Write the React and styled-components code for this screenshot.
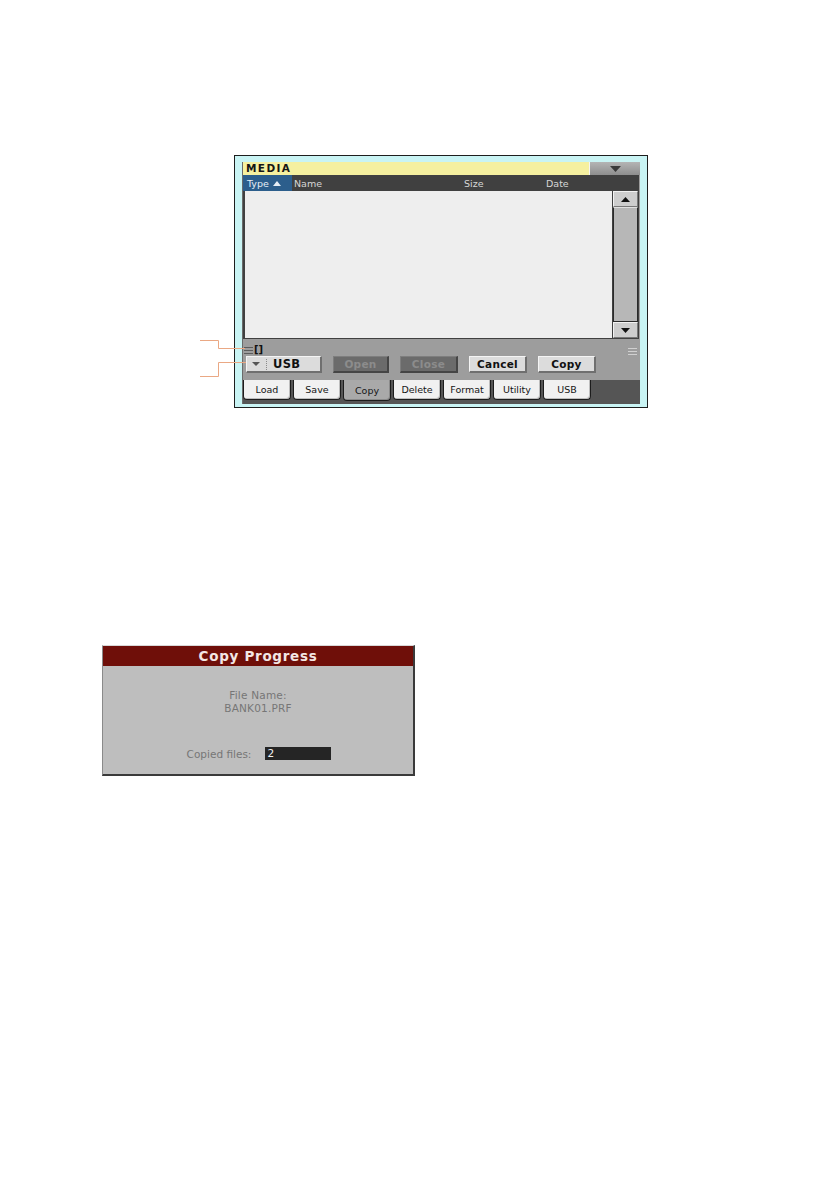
import React from "react";
import styled, { createGlobalStyle } from "styled-components";

const Global = createGlobalStyle`
  * { box-sizing: border-box; }
  html, body { margin: 0; padding: 0; background: #ffffff; }
  body { font-family: "DejaVu Sans", "Liberation Sans", sans-serif; }
`;

const Page = styled.div`
  width: 839px;
  min-height: 1191px;
  padding-top: 155px;
  background: #ffffff;
`;

const Figure = styled.div`
  position: relative;
  padding-left: 234px;
`;

const Callouts = styled.svg`
  position: absolute;
  left: 200px;
  top: 183px;
`;

const Frame = styled.div`
  width: 414px;
  height: 253px;
  border: 1px solid #1e1e1e;
  background: #c9f4f4;
  padding: 6px 7px 3px 7px;
`;

const Panel = styled.div`
  height: 100%;
  display: flex;
  flex-direction: column;
  background: #9d9d9d;
  border-left: 1px solid #6a6a6a;
`;

const TitleBar = styled.div`
  height: 13px;
  display: flex;
`;

const TitleText = styled.div`
  flex: 1;
  background: #f5f0a0;
  font-family: "DejaVu Sans", sans-serif;
  font-weight: bold;
  font-size: 10.5px;
  letter-spacing: 1.4px;
  line-height: 13px;
  padding-left: 3px;
  color: #151515;
`;

const TitleButton = styled.div`
  width: 51px;
  background: linear-gradient(#b4b4b4, #8e8e8e);
  border-left: 1px solid #f4f4f4;
  display: flex;
  align-items: center;
  justify-content: center;
`;

const ListBox = styled.div`
  height: 164px;
  margin: 0 1px 0 0;
  background: #404040;
  display: flex;
  flex-direction: column;
`;

const Header = styled.div`
  height: 16px;
  display: flex;
  align-items: stretch;
  font-size: 9.5px;
  color: #d6d6d6;
`;

const HeadCell = styled.div`
  width: ${(p) => p.$w}px;
  flex: ${(p) => (p.$w ? "none" : 1)};
  display: flex;
  align-items: center;
  gap: 4px;
  padding-left: ${(p) => p.$pad || 0}px;
  background: ${(p) => (p.$active ? "#2c5e8c" : "transparent")};
  color: ${(p) => (p.$active ? "#e6eef6" : "#d6d6d6")};
`;

const ListBody = styled.div`
  flex: 1;
  display: flex;
  padding: 0 1px 1px 2px;
`;

const List = styled.div`
  flex: 1;
  background: #eeeeee;
`;

const Scroll = styled.div`
  width: 25px;
  margin-left: 1px;
  display: flex;
  flex-direction: column;
  background: #303030;
`;

const ScrollBtn = styled.div`
  height: 16px;
  background: #cdcdcd;
  border-top: 1px solid #f2f2f2;
  border-left: 1px solid #f2f2f2;
  border-right: 1px solid #777;
  border-bottom: 1px solid #777;
  display: flex;
  align-items: center;
  justify-content: center;
`;

const Track = styled.div`
  flex: 1;
  background: #b7b7b7;
  border: 1px solid #2a2a2a;
  border-top: 1px solid #e0e0e0;
`;

const StatusRow = styled.div`
  height: 17px;
  display: flex;
  justify-content: space-between;
  align-items: flex-end;
  padding: 0 3px 1px 1px;
`;

const StatusLeft = styled.div`
  display: flex;
  align-items: center;
  gap: 1px;
  font-size: 10px;
  line-height: 10px;
  font-weight: bold;
  color: #111;
`;

const Lines = styled.svg`
  display: block;
`;

const ButtonRow = styled.div`
  height: 17px;
  display: flex;
  gap: 11px;
  padding-left: 3px;
`;

const Button = styled.div`
  width: ${(p) => p.$w}px;
  height: 17px;
  display: flex;
  align-items: center;
  justify-content: center;
  font-family: "DejaVu Sans", sans-serif;
  font-weight: bold;
  font-size: 10.5px;
  letter-spacing: 0.3px;
  background: ${(p) => (p.$disabled ? "#6b6b6b" : "#dcdcdc")};
  color: ${(p) => (p.$disabled ? "#8c8c8c" : "#111")};
  border-top: 1px solid ${(p) => (p.$disabled ? "#7e7e7e" : "#f4f4f4")};
  border-left: 1px solid ${(p) => (p.$disabled ? "#7e7e7e" : "#f4f4f4")};
  border-right: 2px solid ${(p) => (p.$disabled ? "#454545" : "#6f6f6f")};
  border-bottom: 2px solid ${(p) => (p.$disabled ? "#454545" : "#6f6f6f")};
`;

const DropButton = styled(Button)`
  justify-content: flex-start;
  padding-left: 5px;
  font-size: 11.5px;
`;

const DropSep = styled.span`
  width: 0;
  height: 11px;
  border-left: 1px dotted #8a8a8a;
  margin: 0 6px 0 6px;
`;

const TabGap = styled.div`
  height: 7px;
`;

const TabBar = styled.div`
  flex: 1;
  display: flex;
  gap: 2px;
  background: #555555;
  align-items: flex-start;
`;

const Tab = styled.div`
  width: 48px;
  height: ${(p) => (p.$active ? 21 : 20)}px;
  display: flex;
  align-items: center;
  justify-content: center;
  font-size: 9.5px;
  color: #151515;
  background: ${(p) => (p.$active ? "#a9a9a9" : "#f1f1f1")};
  border: 1px solid #1c1c1c;
  border-top: none;
  border-radius: 0 0 4px 4px;
  box-shadow: inset -1px -1px 0 ${(p) => (p.$active ? "#8a8a8a" : "#bdbdbd")};
`;

const Dialog = styled.div`
  margin: 237px 0 0 102px;
  width: 313px;
  height: 131px;
  display: flex;
  flex-direction: column;
  background: #bebebe;
  border-top: 1px solid #d8d8d8;
  border-left: 1px solid #8a8a8a;
  border-right: 2px solid #3a3a3a;
  border-bottom: 2px solid #3a3a3a;
`;

const DialogTitle = styled.div`
  height: 20px;
  background: #6f0f09;
  color: #f3e6e4;
  font-family: "DejaVu Sans", sans-serif;
  font-weight: bold;
  font-size: 13.5px;
  letter-spacing: 0.7px;
  line-height: 20px;
  text-align: center;
`;

const DialogBody = styled.div`
  flex: 1;
  display: flex;
  flex-direction: column;
  align-items: center;
  padding-top: 23px;
  font-size: 10.5px;
  color: #767676;
`;

const Line = styled.div`
  height: 12px;
  line-height: 12px;
  letter-spacing: 0.2px;
  margin-bottom: ${(p) => p.$mb || 0}px;
`;

const CountRow = styled.div`
  display: flex;
  align-items: center;
  gap: 14px;
  margin-left: 2px;
`;

const CountBox = styled.div`
  width: 66px;
  height: 13px;
  background: #252525;
  color: #f2f2f2;
  font-size: 10.5px;
  line-height: 13px;
  padding-left: 2px;
`;

const Tri = ({ up, color = "#111", w = 9, h = 5 }) => (
  <svg width={w} height={h} viewBox={`0 0 ${w} ${h}`}>
    {up ? (
      <polygon points={`0,${h} ${w},${h} ${w / 2},0`} fill={color} />
    ) : (
      <polygon points={`0,0 ${w},0 ${w / 2},${h}`} fill={color} />
    )}
  </svg>
);

const ThreeLines = ({ color }) => (
  <Lines width="9" height="7" viewBox="0 0 9 7">
    <rect x="0" y="0" width="9" height="1" fill={color} />
    <rect x="0" y="3" width="9" height="1" fill={color} />
    <rect x="0" y="6" width="9" height="1" fill={color} />
  </Lines>
);

const tabs = ["Load", "Save", "Copy", "Delete", "Format", "Utility", "USB"];

export default function App() {
  return (
    <Page>
      <Global />
      <Figure>
        <Callouts width="50" height="40" viewBox="0 0 50 40">
          <polyline points="0,2.5 18.5,2.5 18.5,10.5 45,10.5" fill="none" stroke="#eaa884" strokeWidth="1" />
          <polyline points="0,38.5 18.5,38.5 18.5,24.5 46,24.5" fill="none" stroke="#eaa884" strokeWidth="1" />
        </Callouts>
        <Frame>
          <Panel>
            <TitleBar>
              <TitleText>MEDIA</TitleText>
              <TitleButton>
                <Tri color="#3a3a3a" w={11} h={6} />
              </TitleButton>
            </TitleBar>
            <ListBox>
              <Header>
                <HeadCell $w={49} $pad={4} $active>
                  Type <Tri up color="#e6eef6" w={8} h={5} />
                </HeadCell>
                <HeadCell $w={172} $pad={2}>Name</HeadCell>
                <HeadCell $w={82}>Size</HeadCell>
                <HeadCell>Date</HeadCell>
              </Header>
              <ListBody>
                <List />
                <Scroll>
                  <ScrollBtn>
                    <Tri up w={9} h={5} />
                  </ScrollBtn>
                  <Track />
                  <ScrollBtn>
                    <Tri w={9} h={5} />
                  </ScrollBtn>
                </Scroll>
              </ListBody>
            </ListBox>
            <StatusRow>
              <StatusLeft>
                <ThreeLines color="#5c5c5c" />
                <span>[]</span>
              </StatusLeft>
              <ThreeLines color="#d0d0d0" />
            </StatusRow>
            <ButtonRow>
              <DropButton $w={76}>
                <Tri color="#555" w={8} h={4} />
                <DropSep />
                USB
              </DropButton>
              <Button $w={56} $disabled>Open</Button>
              <Button $w={58} $disabled>Close</Button>
              <Button $w={58}>Cancel</Button>
              <Button $w={58}>Copy</Button>
            </ButtonRow>
            <TabGap />
            <TabBar>
              {tabs.map((t) => (
                <Tab key={t} $active={t === "Copy"}>
                  {t}
                </Tab>
              ))}
            </TabBar>
          </Panel>
        </Frame>
      </Figure>
      <Dialog>
        <DialogTitle>Copy Progress</DialogTitle>
        <DialogBody>
          <Line $mb={1}>File Name:</Line>
          <Line $mb={33}>BANK01.PRF</Line>
          <CountRow>
            <span>Copied files:</span>
            <CountBox>2</CountBox>
          </CountRow>
        </DialogBody>
      </Dialog>
    </Page>
  );
}
